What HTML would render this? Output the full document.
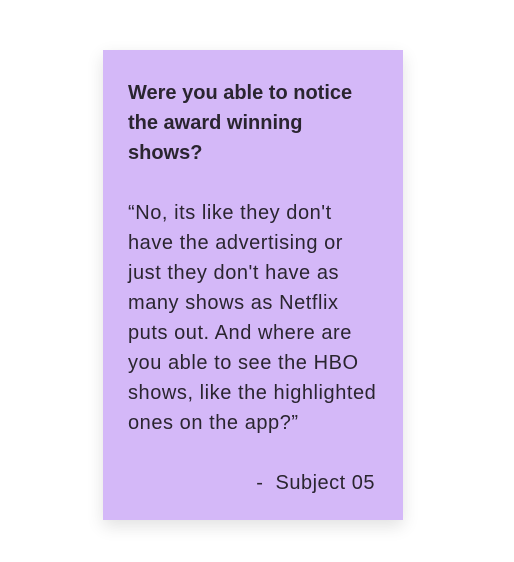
<!DOCTYPE html>
<html><head><style>
html,body{margin:0;padding:0;background:#fff;width:514px;height:562px;overflow:hidden}
.card{position:absolute;left:103px;top:50px;width:300px;height:470px;background:#d4b8f8;box-shadow:0 6px 16px rgba(0,0,0,0.12);}
.t{position:absolute;left:25px;font-family:"Liberation Sans",sans-serif;font-size:20px;line-height:30px;color:#2a2530;white-space:nowrap}
.b{font-weight:bold;top:28px}
.q{top:148px;letter-spacing:0.55px}
.a{position:absolute;right:28px;top:418px;font-family:"Liberation Sans",sans-serif;font-size:20px;line-height:30px;color:#2a2530;white-space:nowrap;letter-spacing:0.5px}
</style></head><body>
<div class="card">
<div class="t b">Were you able to notice<br>the award winning<br>shows?</div>
<div class="t q">“No, its like they don't<br>have the advertising or<br>just they don't have as<br>many shows as Netflix<br>puts out. And where are<br>you able to see the HBO<br>shows, like the highlighted<br>ones on the app?”</div>
<div class="a">-&nbsp;&nbsp;Subject 05</div>
</div>
</body></html>
